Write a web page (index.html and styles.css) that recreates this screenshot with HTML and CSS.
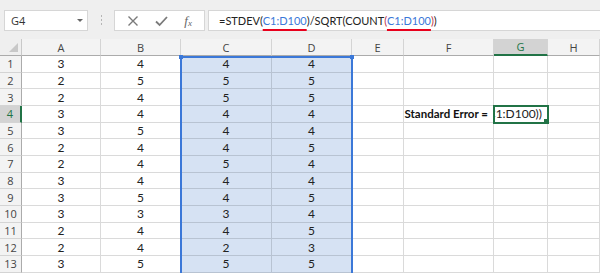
FILE: index.html
```html
<!DOCTYPE html>
<html lang="en">
<head>
    <meta charset="UTF-8">
    <title>Standard Error</title>
    <link rel="stylesheet" href="styles.css">
</head>
<body>
    <div class="toolbar">
        <div class="name-box">
            <span>G4</span>
            <span class="caret"></span>
        </div>
        <div class="grip"><i></i><i></i><i></i></div>
        <div class="icon-box">
            <svg class="icon" width="12" height="12" viewBox="0 0 12 12"><path d="M1.5 1.5 L10.5 10.5 M10.5 1.5 L1.5 10.5" stroke="#7a7a7a" stroke-width="1.4" fill="none"/></svg>
            <svg class="icon" width="13" height="12" viewBox="0 0 13 12"><path d="M1 6.5 L4.6 10 L12 2" stroke="#7a7a7a" stroke-width="1.8" fill="none"/></svg>
            <span class="fx">f<sub>x</sub></span>
        </div>
        <div class="formula-box">
            =STDEV(<span class="ref mark">C1:D100</span>)/SQRT(COUNT<span class="paren">(</span><span class="ref mark">C1:D100</span><span class="paren">)</span>)
        </div>
    </div>

    <div class="sheet">
        <div class="corner"><span class="tri"></span></div>
        <div class="col-head">A</div>
        <div class="col-head">B</div>
        <div class="col-head">C</div>
        <div class="col-head">D</div>
        <div class="col-head">E</div>
        <div class="col-head">F</div>
        <div class="col-head active">G</div>
        <div class="col-head">H</div>

        <div class="row-head">1</div><div class="cell">3</div><div class="cell">4</div><div class="cell sel">4</div><div class="cell sel">4</div><div class="cell"></div><div class="cell"></div><div class="cell"></div><div class="cell"></div>
        <div class="row-head">2</div><div class="cell">2</div><div class="cell">5</div><div class="cell sel">5</div><div class="cell sel">5</div><div class="cell"></div><div class="cell"></div><div class="cell"></div><div class="cell"></div>
        <div class="row-head">3</div><div class="cell">2</div><div class="cell">4</div><div class="cell sel">5</div><div class="cell sel">5</div><div class="cell"></div><div class="cell"></div><div class="cell"></div><div class="cell"></div>
        <div class="row-head active">4</div><div class="cell">3</div><div class="cell">4</div><div class="cell sel">4</div><div class="cell sel">4</div><div class="cell"></div><div class="cell label">Standard Error =</div><div class="cell editing"><span>C1:D100))</span></div><div class="cell"></div>
        <div class="row-head">5</div><div class="cell">3</div><div class="cell">5</div><div class="cell sel">4</div><div class="cell sel">4</div><div class="cell"></div><div class="cell"></div><div class="cell"></div><div class="cell"></div>
        <div class="row-head">6</div><div class="cell">2</div><div class="cell">4</div><div class="cell sel">4</div><div class="cell sel">5</div><div class="cell"></div><div class="cell"></div><div class="cell"></div><div class="cell"></div>
        <div class="row-head">7</div><div class="cell">2</div><div class="cell">4</div><div class="cell sel">5</div><div class="cell sel">4</div><div class="cell"></div><div class="cell"></div><div class="cell"></div><div class="cell"></div>
        <div class="row-head">8</div><div class="cell">3</div><div class="cell">4</div><div class="cell sel">4</div><div class="cell sel">4</div><div class="cell"></div><div class="cell"></div><div class="cell"></div><div class="cell"></div>
        <div class="row-head">9</div><div class="cell">3</div><div class="cell">5</div><div class="cell sel">4</div><div class="cell sel">5</div><div class="cell"></div><div class="cell"></div><div class="cell"></div><div class="cell"></div>
        <div class="row-head">10</div><div class="cell">3</div><div class="cell">3</div><div class="cell sel">3</div><div class="cell sel">4</div><div class="cell"></div><div class="cell"></div><div class="cell"></div><div class="cell"></div>
        <div class="row-head">11</div><div class="cell">2</div><div class="cell">4</div><div class="cell sel">4</div><div class="cell sel">5</div><div class="cell"></div><div class="cell"></div><div class="cell"></div><div class="cell"></div>
        <div class="row-head">12</div><div class="cell">2</div><div class="cell">4</div><div class="cell sel">2</div><div class="cell sel">3</div><div class="cell"></div><div class="cell"></div><div class="cell"></div><div class="cell"></div>
        <div class="row-head">13</div><div class="cell">3</div><div class="cell">5</div><div class="cell sel">5</div><div class="cell sel">5</div><div class="cell"></div><div class="cell"></div><div class="cell"></div><div class="cell"></div>

        <!-- range highlight for C1:D100 -->
        <div class="range"><span class="handle left"></span><span class="handle right"></span></div>
    </div>
</body>
</html>
```

FILE: styles.css
```css
body {
    margin: 0;
    background-color: #fff;
    font-family: Lato, "Liberation Sans", sans-serif;
    overflow: hidden;
}
.toolbar {
    display: flex;
    align-items: flex-start;
    height: 39px;
    padding: 10px 0 0 4px;
    box-sizing: border-box;
    background-color: #efefef;
}
.name-box {
    display: flex;
    align-items: center;
    justify-content: space-between;
    width: 84px;
    height: 21px;
    padding: 0 4px 0 6px;
    box-sizing: border-box;
    background-color: #fff;
    border: 1px solid #d6d6d6;
    font-family: "Open Sans", sans-serif;
    font-size: 11px;
    color: #333;
}
.caret {
    width: 0;
    height: 0;
    border-left: 3px solid transparent;
    border-right: 3px solid transparent;
    border-top: 3px solid #666;
}
.grip {
    display: flex;
    flex-direction: column;
    gap: 2px;
    width: 26px;
    align-items: center;
    padding-top: 5px;
}
.grip i {
    width: 1px;
    height: 2px;
    background-color: #b5b5b5;
}
.icon-box {
    display: flex;
    align-items: center;
    justify-content: space-around;
    width: 91px;
    height: 21px;
    padding: 0 4px;
    box-sizing: border-box;
    background-color: #fff;
    border: 1px solid #d6d6d6;
}
.fx {
    font-family: "Liberation Serif", serif;
    font-style: italic;
    font-size: 13px;
    color: #666;
    line-height: 1;
}
.fx sub {
    font-size: 9px;
    vertical-align: -1px;
}
.formula-box {
    flex: 1;
    margin-left: 3px;
    height: 21px;
    padding-left: 10px;
    box-sizing: border-box;
    background-color: #fff;
    border: 1px solid #d6d6d6;
    border-right: none;
    font-size: 11px;
    line-height: 19px;
    color: #222;
    white-space: nowrap;
}
.ref {
    color: #3b78d8;
}
.mark {
    text-decoration-line: underline;
    text-decoration-color: #e8001c;
    text-decoration-thickness: 2px;
    text-underline-offset: 4px;
}
.paren {
    color: #c0304a;
}
.sheet {
    position: relative;
    display: grid;
    grid-template-columns: 22px 79px 80px 91px 80px 52px 90px 54px 52px;
    grid-template-rows: 17px repeat(13, 16.67px);
    font-size: 12px;
    color: #222;
}
.corner {
    position: relative;
    background-color: #efefef;
    border-right: 1px solid #c9c9c9;
    border-bottom: 1px solid #ababab;
    box-sizing: border-box;
}
.tri {
    position: absolute;
    right: 3px;
    bottom: 3px;
    width: 0;
    height: 0;
    border-left: 9px solid transparent;
    border-bottom: 9px solid #c8c8c8;
}
.col-head {
    display: flex;
    align-items: center;
    justify-content: center;
    background-color: #f3f3f3;
    border-right: 1px solid #d4d4d4;
    border-bottom: 1px solid #ababab;
    box-sizing: border-box;
    font-family: "Open Sans", sans-serif;
    font-size: 11px;
    color: #444;
}
.col-head.active {
    background-color: #d3d3d3;
    border-bottom: 2px solid #217346;
    color: #217346;
}
.row-head {
    display: flex;
    align-items: center;
    justify-content: center;
    background-color: #f3f3f3;
    border-right: 1px solid #ababab;
    border-bottom: 1px solid #d4d4d4;
    box-sizing: border-box;
    font-family: "Open Sans", sans-serif;
    font-size: 11px;
    color: #444;
}
.row-head.active {
    background-color: #d3d3d3;
    border-right: 2px solid #217346;
    color: #217346;
}
.cell {
    display: flex;
    align-items: center;
    justify-content: center;
    border-right: 1px solid #dadada;
    border-bottom: 1px solid #dadada;
    box-sizing: border-box;
    white-space: nowrap;
}
.cell.sel {
    background-color: #d6e2f3;
    border-color: #b8c3d2;
}
.cell.label {
    justify-content: flex-end;
    padding-right: 5px;
    font-size: 11.5px;
    font-weight: bold;
    color: #111;
}
.cell.editing {
    position: relative;
    justify-content: flex-end;
    overflow: hidden;
    padding-right: 5px;
    outline: 2px solid #217346;
    outline-offset: -1px;
}
.cell.editing::after {
    content: "";
    position: absolute;
    right: -1px;
    bottom: -1px;
    width: 4px;
    height: 4px;
    background-color: #217346;
}
.range {
    position: absolute;
    left: 180px;
    top: 17px;
    width: 173px;
    height: 230px;
    border: 2px solid #3b78d8;
    border-bottom: none;
    box-sizing: border-box;
}
.handle {
    position: absolute;
    top: -3px;
    width: 4px;
    height: 4px;
    background-color: #3b78d8;
}
.handle.left {
    left: -3px;
}
.handle.right {
    right: -3px;
}
```
